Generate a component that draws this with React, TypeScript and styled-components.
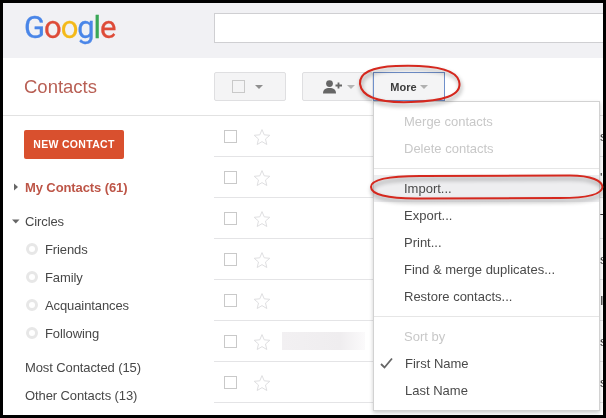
import React from "react";
import styled, { createGlobalStyle } from "styled-components";

const Global = createGlobalStyle`
  html, body { margin: 0; padding: 0; background: #000; }
  body { font-family: "Liberation Sans", Arial, sans-serif; }
`;

const Frame = styled.div`
  position: relative;
  width: 606px;
  height: 418px;
  box-sizing: border-box;
  padding: 3px;
  background: #000;
  overflow: hidden;
`;
const Panel = styled.div`
  width: 600px;
  height: 412px;
  background: #fff;
  overflow: hidden;
  display: flex;
  flex-direction: column;
  filter: blur(0.3px);
`;
const Header = styled.header`
  height: 55px;
  flex: none;
  background: #f1f1f4;
  display: flex;
  align-items: flex-start;
  box-sizing: border-box;
  padding-top: 10px;
`;
const LogoBox = styled.div`
  width: 211px;
  flex: none;
  box-sizing: border-box;
  padding-left: 21px;
  font-family: Roboto, sans-serif;
  font-size: 31px;
  line-height: 30px;
  font-weight: 400;
  letter-spacing: -1.1px;
  -webkit-text-stroke: 0.3px currentColor;
`;
const Letter = styled.span<{ $c: string }>`
  color: ${(p) => p.$c};
`;
const SearchBox = styled.div`
  flex: 1;
  height: 30px;
  box-sizing: border-box;
  background: #fff;
  border: 1px solid #cfcfd2;
  border-right: none;
`;
const Toolbar = styled.div`
  height: 58px;
  flex: none;
  box-sizing: border-box;
  border-bottom: 1px solid #e2e2e2;
  display: flex;
  align-items: flex-start;
`;
const TitleCell = styled.div`
  width: 211px;
  flex: none;
  box-sizing: border-box;
  padding: 16px 0 0 21px;
  font-size: 18.5px;
  line-height: 26px;
  color: #b85f54;
`;
const Buttons = styled.div`
  display: flex;
  padding-top: 14px;
`;
const ToolButton = styled.div<{ $w: number; $gap?: number; $pr?: number; $active?: boolean }>`
  position: relative;
  width: ${(p) => p.$w}px;
  height: 29px;
  margin-left: ${(p) => p.$gap ?? 0}px;
  padding-right: ${(p) => p.$pr ?? 0}px;
  box-sizing: border-box;
  background: #f4f4f5;
  border: 1px solid ${(p) => (p.$active ? "#6f8fca" : "#dfdfe1")};
  border-radius: ${(p) => (p.$active ? "0" : "2px")};
  display: flex;
  align-items: center;
  justify-content: center;
  font-size: 11px;
  font-weight: 700;
  color: #3c3c3c;
`;
const Check = styled.span<{ $bg?: string }>`
  display: block;
  flex: none;
  width: 13px;
  height: 13px;
  box-sizing: border-box;
  border: 1px solid #c9c9c9;
  background: ${(p) => p.$bg ?? "#fff"};
`;
const Caret = styled.span<{ $c?: string; $ml: number }>`
  display: block;
  flex: none;
  margin-left: ${(p) => p.$ml}px;
  width: 0;
  height: 0;
  border-left: 4px solid transparent;
  border-right: 4px solid transparent;
  border-top: 4px solid ${(p) => p.$c ?? "#999"};
`;
const Body = styled.div`
  flex: 1;
  display: flex;
  min-height: 0;
`;
const Sidebar = styled.nav`
  width: 211px;
  flex: none;
  box-sizing: border-box;
  padding-top: 14px;
  font-size: 13px;
  letter-spacing: -0.1px;
  color: #484848;
`;
const NewButton = styled.div`
  margin: 0 0 14px 21px;
  width: 100px;
  height: 29px;
  border-radius: 2px;
  background: #d9502e;
  color: #fff;
  font-size: 10.5px;
  font-weight: 700;
  letter-spacing: 0.3px;
  line-height: 28px;
  text-align: center;
`;
const NavRow = styled.div<{ $pl: number; $mt?: number; $strong?: boolean }>`
  height: 28px;
  margin-top: ${(p) => p.$mt ?? 0}px;
  padding-left: ${(p) => p.$pl}px;
  display: flex;
  align-items: center;
  ${(p) => p.$strong && "color: #bd5547; font-weight: 700;"}
`;
const NavArrow = styled.svg`
  width: 8px;
  height: 8px;
  margin-right: 5px;
  flex: none;
`;
const Radio = styled.span`
  width: 12px;
  height: 12px;
  flex: none;
  box-sizing: border-box;
  margin-left: -1px;
  margin-right: 7px;
  border: 3px solid #e7e7e7;
  border-radius: 50%;
`;
const List = styled.div`
  flex: 1;
  min-width: 0;
`;
const Row = styled.div`
  height: 41px;
  box-sizing: border-box;
  border-bottom: 1px solid #e4e4e6;
  padding-left: 10px;
  display: flex;
  align-items: center;
  overflow: hidden;
  font-size: 13px;
  color: #333;
`;
const StarIcon = styled.svg`
  width: 18px;
  height: 18px;
  margin: 2px 0 0 16px;
  flex: none;
`;
const Blurred = styled.div`
  width: 83px;
  height: 18px;
  margin-left: 11px;
  background: linear-gradient(90deg, #f2f0f2 0%, #efedef 70%, #fbfafb 100%);
`;
const Clipped = styled.span`
  margin-left: auto;
  margin-right: -4px;
  width: 7px;
  flex: none;
`;
const Menu = styled.div`
  position: absolute;
  left: -1px;
  top: 28px;
  width: 227px;
  height: 310px;
  box-sizing: border-box;
  background: #fff;
  border: 1px solid #d2d2d2;
  box-shadow: 0 2px 4px rgba(0, 0, 0, 0.2);
  padding: 6px 0;
  font-size: 13px;
  font-weight: 400;
  z-index: 2;
`;
const MenuItem = styled.div<{ $off?: boolean; $hover?: boolean; $pl?: number }>`
  position: relative;
  height: 27px;
  line-height: 28px;
  padding-left: ${(p) => p.$pl ?? 30}px;
  color: ${(p) => (p.$off ? "#c8c8c8" : "#4a4a4a")};
  background: ${(p) => (p.$hover ? "#eeeef0" : "transparent")};
`;
const MenuRule = styled.div`
  height: 1px;
  margin: 6px 0;
  background: #e6e6e6;
`;
const Tick = styled.svg`
  position: absolute;
  left: 6px;
  top: 7px;
  width: 13px;
  height: 12px;
`;
const Overlay = styled.svg`
  position: absolute;
  left: 0;
  top: 0;
  width: 606px;
  height: 418px;
  z-index: 5;
  pointer-events: none;
  overflow: hidden;
`;
const RedLoop = styled.path`
  fill: none;
  stroke: #d5281e;
  stroke-width: 2;
  filter: drop-shadow(1px 3px 2px rgba(0, 0, 0, 0.4));
`;

const rows: { t: string; blur?: boolean }[] = [
  { t: "s" }, { t: "'" }, { t: "T" }, { t: "s" }, { t: "I" }, { t: "s", blur: true }, { t: "s" },
];

const Star = () => (
  <StarIcon viewBox="0 0 18 18">
    <path
      d="M9 1.6l2.2 5.2 5.6.5-4.3 3.7 1.3 5.5L9 13.6l-4.8 2.9 1.3-5.5-4.3-3.700 5.6-.5z"
      fill="#fff"
      stroke="#dfdfe1"
      strokeWidth="1"
    />
  </StarIcon>
);

export default function App() {
  return (
    <Frame>
      <Global />
      <Panel>
        <Header>
          <LogoBox>
            <Letter $c="#4a86e8">G</Letter>
            <Letter $c="#de4b38">o</Letter>
            <Letter $c="#f4b918">o</Letter>
            <Letter $c="#4a86e8">g</Letter>
            <Letter $c="#3aa757">l</Letter>
            <Letter $c="#de4b38">e</Letter>
          </LogoBox>
          <SearchBox />
        </Header>
        <Toolbar>
          <TitleCell>Contacts</TitleCell>
          <Buttons>
            <ToolButton $w={72} $pr={5}>
              <Check $bg="#f4f4f5" />
              <Caret $ml={10} $c="#8f8f8f" />
            </ToolButton>
            <ToolButton $w={71} $gap={16} $pr={3}>
              <svg width="20" height="14" viewBox="0 0 20 14" style={{ marginLeft: 6 }}>
                <circle cx="6.5" cy="3.6" r="3.4" fill="#666" />
                <path d="M0 13.5c0-4 2.5-5.5 6.5-5.5s6.5 1.500 6.500 5.500z" fill="#666" />
                <path d="M15.500 2.500v6M12.500 5.500h6.500" stroke="#666" strokeWidth="1.800" />
              </svg>
              <Caret $ml={4} $c="#b5b5b5" />
            </ToolButton>
            <ToolButton $w={72} $active>
              More
              <Caret $ml={3} $c="#b0b0b0" />
              <Menu>
                <MenuItem $off>Merge contacts</MenuItem>
                <MenuItem $off>Delete contacts</MenuItem>
                <MenuRule />
                <MenuItem $hover>Import...</MenuItem>
                <MenuItem>Export...</MenuItem>
                <MenuItem>Print...</MenuItem>
                <MenuItem>Find &amp; merge duplicates...</MenuItem>
                <MenuItem>Restore contacts...</MenuItem>
                <MenuRule />
                <MenuItem $off>Sort by</MenuItem>
                <MenuItem $pl={31}>
                  <Tick viewBox="0 0 13 12">
                    <path d="M1 7l3.500 3.500L12 1.500" fill="none" stroke="#666" strokeWidth="1.800" />
                  </Tick>
                  First Name
                </MenuItem>
                <MenuItem $pl={31}>Last Name</MenuItem>
              </Menu>
            </ToolButton>
          </Buttons>
        </Toolbar>
        <Body>
          <Sidebar>
            <NewButton>NEW CONTACT</NewButton>
            <NavRow $pl={9} $strong>
              <NavArrow viewBox="0 0 8 8">
                <path d="M2 0.500l4 3.500-4 3.500z" fill="#666" />
              </NavArrow>
              My Contacts (61)
            </NavRow>
            <NavRow $pl={9} $mt={6}>
              <NavArrow viewBox="0 0 8 8">
                <path d="M0 2.500h7.500L3.750 6.500z" fill="#666" />
              </NavArrow>
              Circles
            </NavRow>
            {["Friends", "Family", "Acquaintances", "Following"].map((n) => (
              <NavRow $pl={24} key={n}>
                <Radio />
                {n}
              </NavRow>
            ))}
            <NavRow $pl={22} $mt={6}>Most Contacted (15)</NavRow>
            <NavRow $pl={22}>Other Contacts (13)</NavRow>
          </Sidebar>
          <List>
            {rows.map((r, i) => (
              <Row key={i}>
                <Check />
                <Star />
                {r.blur && <Blurred />}
                <Clipped>{r.t}</Clipped>
              </Row>
            ))}
          </List>
        </Body>
      </Panel>
      <Overlay viewBox="0 0 606 418">
        <RedLoop d="M360 84C359 73 372 67 396 66C424 65 455 67 459 81C463 96 442 101 411 102C382 103 362 98 360 84Z" />
        <RedLoop d="M371 187C371 180 386 176 420 176L570 175.500C592 175.500 602 181 602.500 187C602 194 590 198 560 198L420 198.500C386 199 371 194 371 187Z" />
      </Overlay>
    </Frame>
  );
}
